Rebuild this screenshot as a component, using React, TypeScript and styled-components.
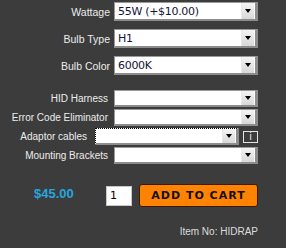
import React from "react";
import styled, { createGlobalStyle } from "styled-components";

const Global = createGlobalStyle`
  html, body { margin: 0; padding: 0; background: #3c3c3c; }
  body { width: 286px; height: 248px; overflow: hidden; font-family: "Liberation Sans", Arial, sans-serif; }
`;

const Page = styled.div`
  width: 286px;
  height: 248px;
  background: #3c3c3c;
  box-sizing: border-box;
  padding-top: 2px;
  display: flex;
  flex-direction: column;
`;

const Group = styled.div<{ $gap: number; $mt: number }>`
  display: flex;
  flex-direction: column;
  gap: ${(p) => p.$gap}px;
  margin-top: ${(p) => p.$mt}px;
`;

const Row = styled.div`
  display: flex;
  align-items: center;
  justify-content: flex-end;
  padding-right: 28px;
`;

const Label = styled.label<{ $gap: number; $size: number }>`
  font-size: ${(p) => p.$size}px;
  color: #ececec;
  margin-right: ${(p) => p.$gap}px;
  white-space: nowrap;
`;

const SelectBox = styled.div<{ $h: number; $focused?: boolean }>`
  position: relative;
  width: 144px;
  height: ${(p) => p.$h}px;
  box-sizing: border-box;
  background: #fff;
  border: 1px ${(p) => (p.$focused ? "dotted #000" : "solid #9a9a9a")};
  border-right: 3px solid #8c8c8c;
  border-bottom: 2px solid #8c8c8c;
  display: flex;
  align-items: center;
`;

const Value = styled.span`
  flex: 1;
  padding-left: 3px;
  font-family: "DejaVu Sans", Verdana, sans-serif;
  font-size: 11px;
  letter-spacing: -0.3px;
  color: #14143a;
`;

const ArrowBtn = styled.span`
  width: 12px;
  height: 100%;
  margin-right: 1px;
  background: linear-gradient(#f4f4f4, #d8d8d8);
  border-left: 1px solid #e8e8e8;
  display: flex;
  align-items: center;
  justify-content: center;
`;

const Triangle = styled.span`
  width: 0;
  height: 0;
  border-left: 3.5px solid transparent;
  border-right: 3.5px solid transparent;
  border-top: 4px solid #000;
`;

const InfoBox = styled.span`
  width: 15px;
  height: 12px;
  box-sizing: border-box;
  margin-left: 4px;
  border: 1px solid #e4e4e4;
  color: #f0f0f0;
  font-size: 10px;
  line-height: 10px;
  display: flex;
  justify-content: center;
`;

const Bottom = styled.div`
  margin-top: 20px;
  display: flex;
  align-items: center;
  padding-left: 34px;
`;

const Price = styled.span`
  font-size: 13px;
  font-weight: bold;
  color: #26a7df;
  width: 72px;
  margin-top: -5px;
`;

const Qty = styled.input`
  width: 26px;
  height: 20px;
  box-sizing: border-box;
  border: 1px solid #c8c8c8;
  background: #fff;
  padding: 0 0 0 3px;
  margin: 0 7px 0 0;
  font-family: "DejaVu Sans", Verdana, sans-serif;
  font-size: 11px;
  color: #000;
  outline: none;
`;

const CartButton = styled.button`
  width: 119px;
  height: 23px;
  box-sizing: border-box;
  background: #ff8200;
  border: 1px solid #3a1a00;
  border-radius: 3px;
  padding: 0;
  font-family: "DejaVu Sans", Verdana, sans-serif;
  font-weight: bold;
  font-size: 11px;
  letter-spacing: 1px;
  color: #111;
  cursor: pointer;
`;

const ItemNo = styled.div`
  margin-top: 19px;
  padding-right: 28px;
  text-align: right;
  font-size: 10px;
  color: #dcdcdc;
`;

type Field = { label: string; value: string; focused?: boolean; info?: boolean };

const top: Field[] = [
  { label: "Wattage", value: "55W (+$10.00)" },
  { label: "Bulb Type", value: "H1" },
  { label: "Bulb Color", value: "6000K" },
];

const extras: Field[] = [
  { label: "HID Harness", value: "" },
  { label: "Error Code Eliminator", value: "" },
  { label: "Adaptor cables", value: "", focused: true, info: true },
  { label: "Mounting Brackets", value: "" },
];

function Select({ value, h, focused }: { value: string; h: number; focused?: boolean }) {
  return (
    <SelectBox $h={h} $focused={focused}>
      <Value>{value}</Value>
      <ArrowBtn>
        <Triangle />
      </ArrowBtn>
    </SelectBox>
  );
}

export default function App() {
  return (
    <>
      <Global />
      <Page>
        <Group $gap={8} $mt={0}>
          {top.map((f) => (
            <Row key={f.label}>
              <Label $gap={4} $size={10.5}>{f.label}</Label>
              <Select value={f.value} h={19} />
            </Row>
          ))}
        </Group>
        <Group $gap={2} $mt={15}>
          {extras.map((f) => (
            <Row key={f.label}>
              <Label $gap={f.info ? 8 : 6} $size={10}>{f.label}</Label>
              <Select value={f.value} h={17} focused={f.focused} />
              {f.info && <InfoBox>i</InfoBox>}
            </Row>
          ))}
        </Group>
        <Bottom>
          <Price>$45.00</Price>
          <Qty defaultValue="1" />
          <CartButton>ADD TO CART</CartButton>
        </Bottom>
        <ItemNo>Item No: HIDRAP</ItemNo>
      </Page>
    </>
  );
}
